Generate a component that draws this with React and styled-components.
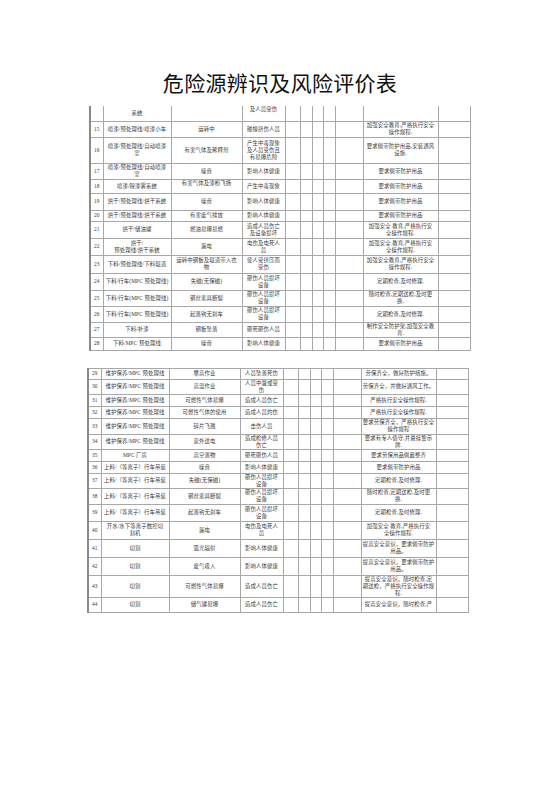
import React from 'react';
import styled, { createGlobalStyle } from 'styled-components';

const GlobalStyle = createGlobalStyle`
  html, body {
    margin: 0;
    padding: 0;
    background: #ffffff;
  }
  body {
    font-family: "Liberation Serif", "Noto Sans CJK SC", serif;
  }
`;

const Page = styled.div`
  width: 560px;
  height: 792px;
  background: #fff;
  padding-top: 70px;
  box-sizing: border-box;
`;

const Title = styled.h1`
  margin: 0;
  text-align: center;
  font-family: "Noto Sans CJK SC", sans-serif;
  font-weight: 400;
  font-size: 21px;
  line-height: 24px;
  color: #111;
  letter-spacing: 0.3px;
`;

const Sheet = styled.table`
  table-layout: fixed;
  border-collapse: collapse;
  width: 380px;
  margin-left: ${p => p.$left}px;
  margin-top: ${p => p.$top}px;
  font-size: 5.4px;
  line-height: 7px;
  letter-spacing: 0.12px;
  color: #3a3a3a;
`;

const Row = styled.tr`
  height: ${p => p.$h}px;
`;

const Cell = styled.td`
  border: 1px solid #a8a8a8;
  border-top: ${p => (p.$noTop ? 'none' : '1px solid #a8a8a8')};
  padding: 0;
  text-align: center;
  vertical-align: ${p => p.$valign || 'middle'};
  overflow: hidden;
  white-space: nowrap;

  &:first-child {
    border-left: 2px solid #8a8a8a;
  }
`;

const Line = styled.div`
  white-space: nowrap;
`;

const COLS = [13, 68, 71, 43, 15, 12, 11, 12, 28, 75, 32];

const SAFE_A = ['加强安全教育,严格执行安全', '操作规程.'];
const SAFE_B = ['加强安全 教育,严格执行安', '全操作规程.'];
const CRUSH = ['砸伤人员损坏', '设备'];
const SWAP = ['随时检查,定期送检,及时更', '换.'];
const GEAR = ['提高安全意识，要求佩带防护', '用品。'];

const firstRows = [
  ['15', '喷漆/预处理线/喷漆小车', '运转中', '碰撞挤伤人员', SAFE_A, 16],
  ['16', ['喷漆/预处理线/自动喷漆', '室'], '有害气体及稀释剂', ['产生中毒现象', '及人员受伤且', '有易爆危险'], ['要求佩带防护用品,安装通风', '设施.'], 26],
  ['17', ['喷漆/预处理线/自动喷漆', '室'], '噪音', '影响人体健康', '要求佩带防护用品', 16],
  ['18', '喷漆/除漆雾系统', '有害气体及漆粉飞扬', '产生中毒现象', '要求佩带防护用品', 14, 'top'],
  ['19', '烘干/预处理线/烘干系统', '噪音', '影响人体健康', '要求佩带防护用品', 17],
  ['20', '烘干/预处理线/烘干系统', '有害废气排放', '影响人体健康', '要求佩带防护用品', 11],
  ['21', '烘干/储油罐', '燃油易爆易燃', ['造成人员伤亡', '及设备损坏'], SAFE_B, 17],
  ['22', ['烘干/', '预处理线/烘干系统'], '漏电', ['电伤及电死人', '员'], SAFE_B, 17],
  ['23', '下料/预处理线/下料辊道', ['运转中钢板及辊道带入衣', '物'], ['使人受挤压而', '受伤'], SAFE_A, 18],
  ['24', '下料/行车(MPC 预处理线)', '失磁(无保磁)', CRUSH, '定期检查,及时修理.', 17],
  ['25', '下料/行车(MPC 预处理线)', '钢丝索具断裂', CRUSH, SWAP, 16],
  ['26', '下料/行车(MPC 预处理线)', '起落钩无刹车', CRUSH, '定期检查,及时修理.', 16],
  ['27', '下料/补漆', '钢板坠落', '砸死砸伤人员', ['制作安全防护架,加强安全教', '育.'], 14],
  ['28', '下料/MPC 预处理线', '噪音', '影响人体健康', '要求佩带防护用品', 13],
];

const secondRows = [
  ['29', '维护保养/MPC 预处理线', '攀高作业', '人员坠落死伤', '劳保齐全，做好防护措施。', 11],
  ['30', '维护保养/MPC 预处理线', '高温作业', ['人员中暑或受', '伤'], '劳保齐全，并做好通风工作。', 15],
  ['31', '维护保养/MPC 预处理线', '可燃性气体易爆', '造成人员伤亡', '严格执行安全操作规程.', 12],
  ['32', '维护保养/MPC 预处理线', '可燃性气体的使用', '造成人员灼伤', '严格执行安全操作规程.', 12],
  ['33', '维护保养/MPC 预处理线', '碎片飞溅', '击伤人员', ['要求劳保齐全，严格执行安全', '操作规程'], 16],
  ['34', '维护保养/MPC 预处理线', '意外送电', ['造成检修人员', '伤亡'], ['要求有专人值守,并悬挂警示', '牌.'], 15],
  ['35', 'MPC 厂房', '高空落物', '砸死砸伤人员', '要求劳保用品佩戴整齐', 12],
  ['36', '上料/（等离子）行车吊装', '噪音', '影响人体健康', '要求佩带防护用品', 12],
  ['37', '上料/（等离子）行车吊装', '失磁(无保磁)', CRUSH, '定期检查,及时修理.', 15],
  ['38', '上料/（等离子）行车吊装', '钢丝索具断裂', CRUSH, SWAP, 16],
  ['39', '上料/（等离子）行车吊装', '起落钩无刹车', CRUSH, '定期检查,及时修理.', 17],
  ['40', ['开水/水下等离子数控切', '割机'], '漏电', ['电伤及电死人', '员'], SAFE_B, 18],
  ['41', '切割', '弧光辐射', '影响人体健康', GEAR, 18],
  ['42', '切割', '废气吸入', '影响人体健康', GEAR, 18],
  ['43', '切割', '可燃性气体易爆', '造成人员伤亡', ['提高安全意识，随时检查,定', '期送检，严格执行安全操作规', '程.'], 21],
  ['44', '切割', '储气罐易爆', '造成人员伤亡', '提高安全意识，随时检查,严', 15],
];

function Lines({ value }) {
  if (Array.isArray(value)) {
    return value.map((v, i) => <Line key={i}>{v}</Line>);
  }
  return value;
}

function DataRow({ row }) {
  const [num, sys, hazard, accident, measure, h, valign] = row;
  return (
    <Row $h={h}>
      <Cell>{num}</Cell>
      <Cell><Lines value={sys} /></Cell>
      <Cell $valign={valign}><Lines value={hazard} /></Cell>
      <Cell><Lines value={accident} /></Cell>
      <Cell />
      <Cell />
      <Cell />
      <Cell />
      <Cell />
      <Cell><Lines value={measure} /></Cell>
      <Cell />
    </Row>
  );
}

function Cols() {
  return (
    <colgroup>
      {COLS.map((w, i) => (
        <col key={i} style={{ width: w }} />
      ))}
    </colgroup>
  );
}

export default function App() {
  return (
    <Page>
      <GlobalStyle />
      <Title>危险源辨识及风险评价表</Title>

      <Sheet $left={89} $top={12}>
        <Cols />
        <tbody>
          <Row $h={15}>
            <Cell $noTop />
            <Cell $noTop>系统</Cell>
            <Cell $noTop />
            <Cell $noTop $valign="top">及人员受伤</Cell>
            <Cell $noTop />
            <Cell $noTop />
            <Cell $noTop />
            <Cell $noTop />
            <Cell $noTop />
            <Cell $noTop />
            <Cell $noTop />
          </Row>
          {firstRows.map(r => (
            <DataRow key={r[0]} row={r} />
          ))}
        </tbody>
      </Sheet>

      <Sheet $left={87} $top={17}>
        <Cols />
        <tbody>
          {secondRows.map(r => (
            <DataRow key={r[0]} row={r} />
          ))}
        </tbody>
      </Sheet>
    </Page>
  );
}
